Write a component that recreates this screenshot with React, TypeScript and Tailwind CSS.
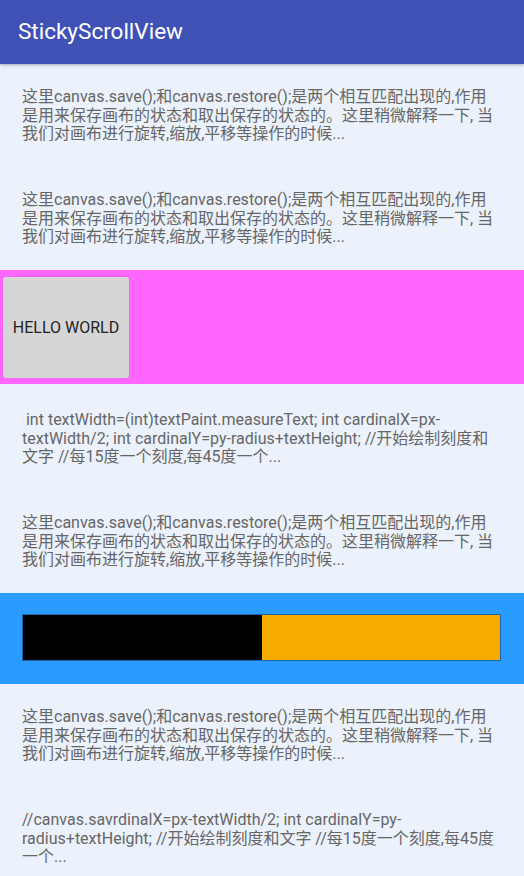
import React from 'react';

const CANVAS_TEXT =
  '这里canvas.save();和canvas.restore();是两个相互匹配出现的,作用是用来保存画布的状态和取出保存的状态的。这里稍微解释一下, 当我们对画布进行旋转,缩放,平移等操作的时候...';

const MEASURE_TEXT =
  '\u00a0int textWidth=(int)textPaint.measureText; int cardinalX=px-textWidth/2; int cardinalY=py-radius+textHeight; //开始绘制刻度和文字 //每15度一个刻度,每45度一个...';

const COMMENT_TEXT =
  '//canvas.savrdinalX=px-textWidth/2; int cardinalY=py-radius+textHeight; //开始绘制刻度和文字 //每15度一个刻度,每45度一个...';

const TextBlock: React.FC<{ text: string; className?: string }> = ({ text, className = '' }) => (
  <div className={`h-[103px] pl-[22px] pr-[24px] pt-[24px] text-[16px] leading-[18.5px] text-[#666666] ${className}`}>
    <p>{text}</p>
  </div>
);

const App: React.FC = () => {
  return (
    <div
      className="h-screen overflow-hidden bg-[#ecf2fc]"
      style={{ fontFamily: 'Roboto, "Noto Sans CJK SC", sans-serif' }}
    >
      {/* toolbar */}
      <div className="relative z-10 flex h-[64px] items-center bg-[#3f51b5] pl-[18px] shadow-[0_1px_3px_rgba(0,0,0,0.3)]">
        <h1 className="text-[22.5px] text-white">StickyScrollView</h1>
      </div>

      <TextBlock text={CANVAS_TEXT} />
      <TextBlock text={CANVAS_TEXT} />

      {/* sticky pink header */}
      <div className="h-[114px] bg-[#ff66ff] pl-[3px] pt-[7px]">
        <div className="flex h-[101px] w-[126px] items-center justify-center rounded-[2px] bg-[#d6d6d6] shadow-[0_0_1px_rgba(0,0,0,0.35)]">
          <span className="text-[16px] text-[#222222]">HELLO WORLD</span>
        </div>
      </div>

      <TextBlock text={MEASURE_TEXT} className="mt-[3px]" />
      <TextBlock text={CANVAS_TEXT} />

      {/* blue bar section */}
      <div className="h-[91px] bg-[#2b9cff] px-[22px] pt-[21px]">
        <div className="flex h-[47px] w-[479px] border border-[#1d66ad]">
          <div className="flex-1 bg-black" />
          <div className="flex-1 bg-[#f5ab00]" />
        </div>
      </div>

      <TextBlock text={CANVAS_TEXT} />
      <TextBlock text={COMMENT_TEXT} />
    </div>
  );
};

export default App;
